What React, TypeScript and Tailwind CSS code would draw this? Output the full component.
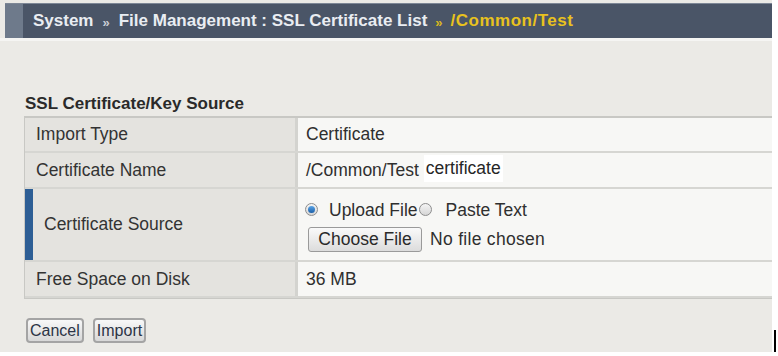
import React from 'react';

const font = { fontFamily: '"Liberation Sans", Arial, sans-serif' };

const Radio = ({ checked }: { checked?: boolean }) => (
  <span className="inline-flex items-center justify-center w-[13px] h-[13px] rounded-full border border-[#8d8d8d] bg-gradient-to-b from-[#f4f4f4] to-[#d6d6d6]">
    {checked && <span className="w-[7px] h-[7px] rounded-full bg-gradient-to-b from-[#5aa4e6] to-[#1a5fa8]" />}
  </span>
);

const Row = ({
  label,
  height,
  accent,
  children,
}: {
  label: string;
  height: string;
  accent?: boolean;
  children: React.ReactNode;
}) => (
  <div className={`flex border-b-2 border-[#d6d6d2] ${height}`}>
    <div className="flex w-[273px] bg-[#e4e3df] border-r-[3px] border-[#d3d3cf]">
      {accent && <div className="w-[8px] bg-[#2d5e95]" />}
      <div className="flex items-center pl-[11px] text-[17.5px] text-[#333]">{label}</div>
    </div>
    <div className="flex-1 flex items-center pl-[8px] bg-[#f7f7f5] text-[17.5px] text-[#2f2f2f]">{children}</div>
  </div>
);

export default function App() {
  return (
    <div className="relative w-[778px] h-[356px] bg-white overflow-hidden" style={font}>
      <div className="w-[772px] h-[352px] bg-[#ebeae6] pt-[3px]">
        {/* breadcrumb header */}
        <div className="flex ml-[5px] h-[35px] border-t border-[#7d8796]">
          <div className="w-[18px] bg-[#6e7a8b]" />
          <div className="flex-1 flex items-center pl-[10px] bg-[#4a5567] text-[17px] font-bold text-[#e9edf2]">
            <span>System</span>
            <span className="mx-[9px] text-[13px] text-[#c9ced6] mt-[3px]">»</span>
            <span>File Management : SSL Certificate List</span>
            <span className="mx-[8px] text-[13px] text-[#d9b81c] mt-[3px]">»</span>
            <span className="text-[#e8c21e] tracking-[0.5px]">/Common/Test</span>
          </div>
        </div>
        <div className="h-[3px] bg-[#f5f5f3]" />

        <div className="pl-[24px] pt-[53px]">
          <div className="text-[17px] font-bold text-[#2a2a2a] leading-[20px] pl-[1px]">
            SSL Certificate/Key Source
          </div>
          <div className="mt-[2px] border-t-[2px] border-b-[1px] border-l border-[#c8c8c4]">
            <Row label="Import Type" height="h-[35px]">Certificate</Row>
            <Row label="Certificate Name" height="h-[36px]">
              <span>/Common/Test</span>
              <span className="ml-[5px] px-[2px] bg-white text-[#262626] -mt-[3px]">certificate</span>
            </Row>
            <Row label="Certificate Source" height="h-[73px]" accent>
              <div className="flex flex-col gap-[3px] -ml-[1px]">
                <div className="flex items-center">
                  <Radio checked />
                  <span className="ml-[11px]">Upload File</span>
                  <span className="ml-[1px]"><Radio /></span>
                  <span className="ml-[14px]">Paste Text</span>
                </div>
                <div className="flex items-center">
                  <span className="ml-[3px] h-[25px] w-[114px] flex items-center justify-center rounded-[3px] border border-[#9a9a9a] bg-gradient-to-b from-[#fafafa] to-[#dcdcdc] text-[#2a2a2a]">
                    Choose File
                  </span>
                  <span className="ml-[8px] tracking-[0.3px]">No file chosen</span>
                </div>
              </div>
            </Row>
            <Row label="Free Space on Disk" height="h-[36px]">36 MB</Row>
          </div>
          <div className="flex gap-[9px] mt-[19px] pl-[2px]">
            <span className="h-[25px] px-[2px] flex items-center rounded-[4px] border-2 border-[#a4a4a4] bg-gradient-to-b from-[#f8f8f8] to-[#d8d8d8] text-[16px] text-[#2c3446]">
              Cancel
            </span>
            <span className="h-[25px] px-[2px] flex items-center rounded-[4px] border-2 border-[#a4a4a4] bg-gradient-to-b from-[#f8f8f8] to-[#d8d8d8] text-[16px] text-[#2c3446]">
              Import
            </span>
          </div>
        </div>
      </div>
      <div className="absolute left-[774px] top-[330px] w-[2px] h-[22px] bg-black" />
    </div>
  );
}
